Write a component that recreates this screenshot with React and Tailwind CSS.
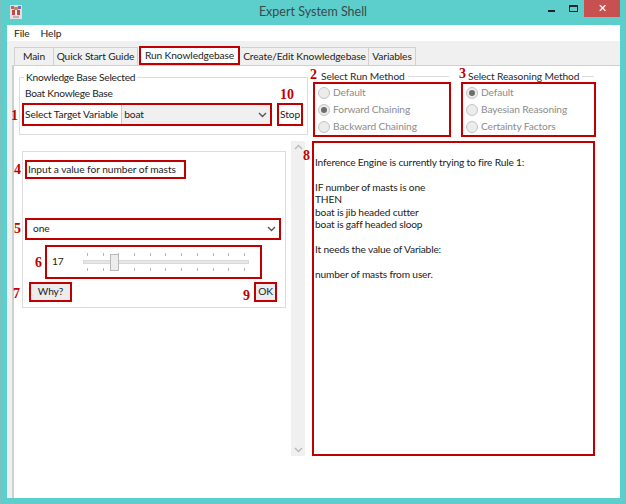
import React from "react";

const sans = { fontFamily: 'Lato, "Noto Sans", sans-serif' };

function Num({ children, className }) {
  return (
    <span className={"absolute font-bold text-[14px] leading-[16px] tracking-normal text-[#c00000] [font-family:'Liberation_Serif',serif] " + className}>
      {children}
    </span>
  );
}

function Chevron({ className = "" }) {
  return (
    <svg width="9" height="6" viewBox="0 0 9 6" className={className}>
      <path d="M1 1l3.5 3.5L8 1" fill="none" stroke="#555" strokeWidth="1.4" />
    </svg>
  );
}

function Radio({ label, checked }) {
  return (
    <div className="flex items-center gap-[3px] h-[18.5px] text-[#8c8c8c]">
      <span className="w-[12px] h-[12px] rounded-full border border-[#c4c4c4] bg-[#ececec] flex items-center justify-center">
        {checked && <span className="w-[6px] h-[6px] rounded-full bg-[#6d6d6d]" />}
      </span>
      <span>{label}</span>
    </div>
  );
}

function RadioGroup({ title, items, className }) {
  return (
    <div className={"relative " + className}>
      <div className="h-[12px] text-[#2a2a2a] leading-[12px] flex items-center -mt-[6px]">
        <span className="pr-[3px] bg-white whitespace-nowrap">{title}</span>
        <span className="flex-1 h-px bg-[#dcdcdc] mr-[2px]" />
      </div>
      <div className="border-2 border-[#c00000] h-[55px] pl-[3px] flex flex-col justify-center">
        {items.map(([l, c]) => (
          <Radio key={l} label={l} checked={c} />
        ))}
      </div>
    </div>
  );
}

function Ticks() {
  return (
    <div className="flex justify-between px-[4px]">
      {Array.from({ length: 11 }).map((_, i) => (
        <span key={i} className="w-px h-[3px] bg-[#b5b5b5]" />
      ))}
    </div>
  );
}

const Tab = ({ children, active, className = "" }) => (
  <div
    className={
      "flex items-center justify-center whitespace-nowrap " +
      (active
        ? "bg-white border-2 border-[#c00000] h-[19px] relative z-10 "
        : "h-[18px] bg-[#f0f0f0] border-t border-r border-[#d0d0d0] ") +
      className
    }
  >
    {children}
  </div>
);

export default function App() {
  return (
    <div style={sans} className="w-[626px] h-[504px] bg-[#5ccfcd] flex flex-col text-[10.2px] tracking-[-0.1px] text-[#222] overflow-hidden border-x border-b border-[#7fbfbe]">
      <div className="h-[25px] grid grid-cols-[1fr_auto_1fr] items-center shrink-0">
        <svg width="14" height="14" viewBox="0 0 14 14" className="ml-[8px] -mt-[2px]">
          <rect x="1" y="0" width="12" height="14" fill="#e6dfe0" />
          <rect x="2" y="1" width="3" height="3" fill="#b5657a" />
          <rect x="9" y="1" width="3" height="3" fill="#7a6fa8" />
          <rect x="5" y="2" width="4" height="3" fill="#c98a4a" />
          <rect x="3" y="5" width="8" height="5" fill="#c9454d" />
          <rect x="6" y="5" width="2" height="5" fill="#f4f0f0" />
          <rect x="4" y="11" width="6" height="2" fill="#b9b3b3" />
        </svg>
        <div className="text-center text-[12.5px] tracking-normal text-[#3b4a4a]">Expert System Shell</div>
        <div className="flex items-start self-start justify-end h-[17px]">
          <span className="w-[7px] h-[2px] bg-[#222] mt-[10px] mr-[14px]" />
          <span className="w-[9px] h-[7px] border border-[#222] border-t-2 mt-[5px] mr-[6px]" />
          <span className="w-[36px] h-[17px] bg-[#c75050] text-white text-[11px] leading-[15px] text-center mr-[5px]">✕</span>
        </div>
      </div>

      <div className="flex-1 ml-[6px] mr-[5px] mb-[5px] bg-[#f0f0f0] flex flex-col min-h-0">
        <div className="h-[16px] bg-white flex items-center gap-[11px] pl-[7px] pt-[1px] shrink-0 text-[#222]">
          <span>File</span>
          <span>Help</span>
        </div>
        <div className="h-[24px] flex items-end pl-[7px] shrink-0">
          <Tab className="w-[40px] border-l">Main</Tab>
          <Tab className="w-[84px] mr-[1px]">Quick Start Guide</Tab>
          <Tab active className="w-[101px] mr-[1px]">Run Knowledgebase</Tab>
          <Tab className="w-[128px]">Create/Edit Knowledgebase</Tab>
          <Tab className="w-[47px]">Variables</Tab>
        </div>

        <div className="flex-1 ml-[5px] bg-white border-t border-l-2 border-[#d0d0d0] pl-[5px] pt-[5px] min-h-0">
          <div className="flex">
            <fieldset className="w-[289px] h-[64px] border border-[#dcdcdc] shrink-0">
              <legend className="ml-[4px] px-[2px] leading-[12px] tracking-[-0.25px] -mt-[1px]">Knowledge Base Selected</legend>
              <div className="pl-[5px] h-[15px] mt-[3px] leading-[15px] tracking-[-0.25px]">Boat Knowlege Base</div>
              <div className="flex items-stretch gap-[5px] pl-[2px] mt-[2px]">
                <div className="w-[250px] h-[23px] border-2 border-[#c00000] flex items-center pl-[1px] relative">
                  <span className="whitespace-nowrap">Select Target Variable</span>
                  <div className="flex-1 ml-[3px] h-full bg-[#f0f0f0] border-l border-[#c9c9c9] flex items-center justify-between pl-[2px] pr-[3px]">
                    <span>boat</span>
                    <Chevron />
                  </div>
                  <Num className="-left-[13px] top-[3px]">1</Num>
                </div>
                <div className="w-[26px] h-[23px] border-2 border-[#c00000] flex items-center justify-center relative">
                  Stop
                  <Num className="-top-[18px] left-[1px]">10</Num>
                </div>
              </div>
            </fieldset>
            <RadioGroup
              className="w-[138px] ml-[5px] shrink-0 mt-[5px]"
              title={<span className="relative block pl-[8px]">Select Run Method<Num className="-left-[3px] -top-[3px]">2</Num></span>}
              items={[["Default", false], ["Forward Chaining", true], ["Backward Chaining", false]]}
            />
            <RadioGroup
              className="w-[135px] ml-[10px] shrink-0 mt-[5px]"
              title={<span className="relative block pl-[7px]">Select Reasoning Method<Num className="-left-[2px] -top-[4px]">3</Num></span>}
              items={[["Default", true], ["Bayesian Reasoning", false], ["Certainty Factors", false]]}
            />
          </div>

          <div className="flex mt-[4px]">
            <div className="w-[264px] h-[157px] mt-[10px] ml-[3px] border border-[#dcdcdc] relative pl-[2px] shrink-0 flex flex-col">
              <div className="w-[161px] h-[19px] border-2 border-[#c00000] mt-[8px] flex items-center pl-[1px] relative whitespace-nowrap tracking-[-0.05px]">
                Input a value for number of masts
                <Num className="-left-[13px] top-[0px]">4</Num>
              </div>
              <div className="h-[22px] mt-[39px] border-2 border-[#c00000] flex items-center justify-between pl-[6px] pr-[3px] relative w-[256px]">
                <span>one</span>
                <Chevron />
                <Num className="-left-[13px] top-[1px]">5</Num>
              </div>
              <div className="w-[217px] h-[34px] ml-[20px] mt-[5px] border-2 border-[#c00000] flex items-center relative">
                <span className="ml-[5px] w-[31px]">17</span>
                <div className="w-[166px] flex flex-col gap-[4px] relative">
                  <Ticks />
                  <div className="h-[4px] bg-[#e6e6e6] border border-[#dadada] relative">
                    <span className="absolute left-[26px] -top-[7px] w-[9px] h-[17px] bg-[#ececec] border border-[#b9b9b9]" />
                  </div>
                  <Ticks />
                </div>
                <Num className="-left-[12px] top-[8px]">6</Num>
              </div>
              <div className="flex justify-between mt-[3px] w-[252px] pl-[4px]">
                <div className="w-[43px] h-[20px] border-2 border-[#c00000] bg-[#ececec] flex items-center justify-center relative">
                  Why?
                  <Num className="-left-[18px] top-[2px]">7</Num>
                </div>
                <div className="w-[23px] h-[20px] border-2 border-[#c00000] bg-[#ececec] flex items-center justify-center relative">
                  OK
                  <Num className="-left-[13px] top-[4px]">9</Num>
                </div>
              </div>
            </div>

            <div className="w-[14px] h-[315px] ml-[5px] bg-[#f0f0f0] flex flex-col justify-between items-center py-[3px] shrink-0">
              <svg width="9" height="6" viewBox="0 0 9 6"><path d="M1 5l3.5-3.5L8 5" fill="none" stroke="#b8b8b8" strokeWidth="1.4" /></svg>
              <svg width="9" height="6" viewBox="0 0 9 6"><path d="M1 1l3.5 3.5L8 1" fill="none" stroke="#b8b8b8" strokeWidth="1.4" /></svg>
            </div>

            <div className="w-[283px] h-[315px] ml-[7px] border-2 border-[#c00000] pl-[1px] pt-[13px] leading-[12.4px] tracking-[-0.17px] relative shrink-0 text-[#222]">
              <Num className="-left-[11px] top-[5px]">8</Num>
              <p>Inference Engine is currently trying to fire Rule 1:</p>
              <p className="mt-[12.4px]">IF number of masts is one</p>
              <p>THEN</p>
              <p>boat is jib headed cutter</p>
              <p>boat is gaff headed sloop</p>
              <p className="mt-[12.4px]">It needs the value of Variable:</p>
              <p className="mt-[12.4px]">number of masts from user.</p>
            </div>
          </div>
        </div>
      </div>
    </div>
  );
}
